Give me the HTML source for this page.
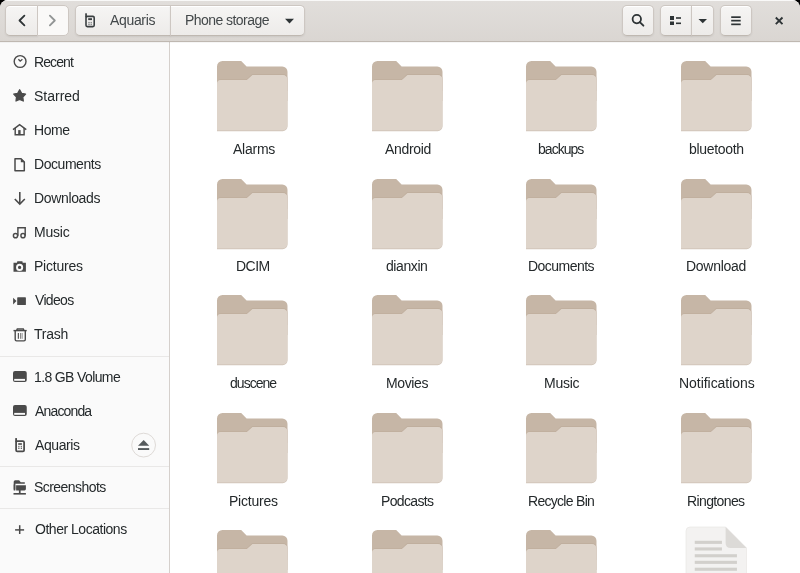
<!DOCTYPE html>
<html><head><meta charset="utf-8">
<style>
html,body{margin:0;padding:0;width:800px;height:573px;overflow:hidden;background:#000;}
*{box-sizing:border-box;}
.win{position:absolute;left:0;top:0;width:800px;height:573px;border-radius:8px 8px 0 0;overflow:hidden;background:#fff;font-family:"Liberation Sans",sans-serif;font-size:13px;color:#2e3436;}
.hdr{position:absolute;left:0;top:0;width:800px;height:42px;background:linear-gradient(to bottom,#e1dedb,#dad6d2);border-bottom:1px solid #bfb8b1;box-shadow:inset 0 1px rgba(255,255,255,0.8);}
.btn{position:absolute;top:5px;height:31px;border:1px solid #cdc7c2;border-bottom-color:#bfb8b1;background:linear-gradient(to bottom,#f6f5f4,#edebe9);box-shadow:inset 0 1px #fff,0 1px 2px rgba(0,0,0,0.07);border-radius:5px;}
.side{position:absolute;left:0;top:42px;width:170px;height:531px;background:#fafafa;border-right:1px solid #d5d0cc;}
.t{position:absolute;white-space:nowrap;line-height:15px;height:15px;font-size:14px;will-change:transform;color:#24292b;}
.sep{position:absolute;left:0;width:169px;height:1px;background:#e9e8e7;}
svg{position:absolute;overflow:visible;}
</style></head><body>
<div class="win">
<div class="hdr">
  <div class="btn" style="left:5px;width:33px;border-radius:5px 0 0 5px;"></div>
  <div class="btn" style="left:37px;width:32px;border-radius:0 5px 5px 0;background:#faf9f8;box-shadow:none;border-color:#cdc7c2;"></div>
  <div class="btn" style="left:75px;width:96px;border-radius:5px 0 0 5px;"></div>
  <div class="btn" style="left:170px;width:135px;border-radius:0 5px 5px 0;"></div>
  <div class="btn" style="left:622px;width:32px;"></div>
  <div class="btn" style="left:660px;width:32px;border-radius:5px 0 0 5px;"></div>
  <div class="btn" style="left:691px;width:23px;border-radius:0 5px 5px 0;"></div>
  <div class="btn" style="left:720px;width:32px;"></div>
  <svg width="800" height="42" style="left:0;top:0">
    <polyline points="24.4,15.6 19.5,20.5 24.4,25.4" fill="none" stroke="#2e3436" stroke-width="1.8" stroke-linecap="round" stroke-linejoin="round"/>
    <polyline points="49.9,15.6 54.8,20.5 49.9,25.4" fill="none" stroke="#929595" stroke-width="1.8" stroke-linecap="round" stroke-linejoin="round"/>
    <!-- phone -->
    <rect x="86" y="16.4" width="8.2" height="10.25" rx="1.3" fill="none" stroke="#3a3f41" stroke-width="1.6"/>
    <rect x="85.2" y="13.3" width="1.7" height="4" fill="#3a3f41"/>
    <rect x="88.2" y="18.2" width="3.8" height="1.9" fill="#3a3f41"/>
    <rect x="88.2" y="21.9" width="1.6" height="1.4" fill="#8f9293"/><rect x="90.5" y="21.9" width="1.5" height="1.4" fill="#8f9293"/>
    <rect x="88.2" y="23.8" width="1.6" height="1.3" fill="#8f9293"/><rect x="90.5" y="23.8" width="1.5" height="1.3" fill="#8f9293"/>
    <polygon points="285,18.8 294,18.8 289.5,23.5" fill="#2e3436"/>
    <!-- search -->
    <circle cx="636.8" cy="19.1" r="4.2" fill="none" stroke="#2e3436" stroke-width="1.8"/>
    <line x1="639.8" y1="22.1" x2="643.4" y2="25.7" stroke="#2e3436" stroke-width="1.9" stroke-linecap="round"/>
    <!-- view list -->
    <rect x="670" y="16" width="4" height="4" fill="#2e3436"/>
    <rect x="670" y="21.5" width="4" height="3.5" fill="#2e3436"/>
    <rect x="676" y="17.2" width="5" height="1.6" fill="#2e3436"/>
    <rect x="676" y="22.5" width="5" height="1.6" fill="#2e3436"/>
    <polygon points="698.5,18.9 707,18.9 702.75,23.3" fill="#2e3436"/>
    <!-- menu -->
    <rect x="731.2" y="16.3" width="9.5" height="1.7" fill="#2e3436"/>
    <rect x="731.2" y="19.8" width="9.5" height="1.7" fill="#2e3436"/>
    <rect x="731.2" y="23.5" width="9.5" height="1.7" fill="#2e3436"/>
    <!-- close -->
    <path d="M775.8,17.5 L782.5,24.2 M782.5,17.5 L775.8,24.2" stroke="#2e3436" stroke-width="1.9"/>
  </svg>
</div>

<div class="side">
</div>
<svg width="170" height="573" style="left:0;top:0">
  <g fill="none" stroke="#4a4a4a" stroke-width="1.4">
    <circle cx="20.1" cy="61.5" r="5.9"/>
    <polyline points="18.4,59.2 20.2,61.2 22.4,59.2" stroke-width="1.3"/>
  </g>
  <polygon points="19.65,89.80 21.59,93.33 25.55,94.08 22.79,97.02 23.29,101.02 19.65,99.30 16.01,101.02 16.51,97.02 13.75,94.08 17.71,93.33" fill="#4a4a4a" stroke="#4a4a4a" stroke-width="1.3" stroke-linejoin="round"/>
  <g fill="none" stroke="#4a4a4a" stroke-width="1.45">
    <polyline points="13,129.6 19.6,124.6 26.3,129.6"/>
    <polyline points="15.2,128 15.2,134.8 24.1,134.8 24.1,128"/>
  </g>
  <rect x="18.2" y="130.1" width="2.4" height="5" fill="#4a4a4a"/>
  <path d="M15,158.8 L21,158.8 L24.3,162.1 L24.3,170.7 L15,170.7 Z" fill="none" stroke="#4a4a4a" stroke-width="1.5" stroke-linejoin="round"/>
  <path d="M20.8,158.2 L20.8,162.2 L25,162.2 Z" fill="#4a4a4a"/>
  <g fill="none" stroke="#4a4a4a" stroke-width="1.6">
    <line x1="19.8" y1="192" x2="19.8" y2="203"/>
    <polyline points="14.8,199 19.8,204 24.8,199"/>
  </g>
  <g fill="none" stroke="#4a4a4a" stroke-width="1.45">
    <circle cx="15.5" cy="235.7" r="2.1"/>
    <circle cx="23" cy="235.7" r="2.1"/>
    <polyline points="17.9,235.7 17.9,227.7 25.2,227.7 25.2,235.7"/>
  </g>
  <path d="M13.5,262.8 L17,262.8 L17.3,261.2 L22.4,261.2 L22.7,262.8 L25.9,262.8 L25.9,271.7 L13.5,271.7 Z" fill="#4a4a4a"/>
  <circle cx="19.6" cy="267.4" r="2.6" fill="none" stroke="#fafafa" stroke-width="1.9"/>
  <path d="M13.1,297.8 L16.5,301.1 L13.1,304.4 Z" fill="#4a4a4a"/>
  <rect x="17.2" y="297.3" width="8.7" height="7.7" rx="0.6" fill="#4a4a4a"/>
  <g fill="none" stroke="#4a4a4a" stroke-width="1.4">
    <line x1="13.5" y1="330.6" x2="26.7" y2="330.6"/>
    <polyline points="16.6,330.6 17.3,329 23.3,329 24,330.6"/>
    <path d="M15.2,331 L15.2,339.5 Q15.2,340.9 16.6,340.9 L24,340.9 Q25.3,340.9 25.3,339.5 L25.3,331"/>
  </g>
  <rect x="17.8" y="333" width="1.1" height="5.8" fill="#4a4a4a"/>
  <rect x="20" y="333" width="1" height="5.8" fill="#888"/>
  <rect x="21.6" y="333" width="1" height="5.8" fill="#888"/>
  <rect x="13" y="371.1" width="13.75" height="10.8" rx="2" fill="#4a4a4a"/>
  <rect x="14.2" y="378.9" width="10.8" height="1.9" fill="#fafafa"/>
  <rect x="13" y="405.1" width="13.75" height="10.8" rx="2" fill="#4a4a4a"/>
  <rect x="14.2" y="412.9" width="10.8" height="1.9" fill="#fafafa"/>
  <rect x="16.1" y="441.1" width="8" height="10.3" rx="1.2" fill="none" stroke="#4a4a4a" stroke-width="1.75"/>
  <rect x="15.2" y="438.1" width="1.8" height="4" fill="#4a4a4a"/>
  <rect x="18.2" y="443.2" width="3.7" height="1.6" fill="#4a4a4a"/>
  <rect x="18.2" y="445.8" width="1.3" height="1.2" fill="#777"/><rect x="20.7" y="445.8" width="1.3" height="1.2" fill="#777"/>
  <rect x="18.2" y="447.6" width="1.3" height="1.3" fill="#555"/><rect x="20.7" y="447.6" width="1.3" height="1.3" fill="#555"/>
  <path d="M13.7,481.8 Q13.7,480.3 15.2,480.3 L19.1,480.3 L20.8,482.2 L24.8,482.2 L24.8,483.8 L15.3,483.8 L15.3,490.4 L13.7,490.4 Z" fill="#4a4a4a"/>
  <path d="M16.1,485.2 L25.9,485.2 L25.9,489 Q25.9,490.4 24.5,490.4 L16.1,490.4 Z" fill="#4a4a4a"/>
  <rect x="13.7" y="484.5" width="1.6" height="5" fill="#4a4a4a"/>
  <rect x="18.9" y="490" width="1.7" height="3.2" fill="#4a4a4a"/>
  <rect x="13.5" y="493" width="12.4" height="1.6" fill="#4a4a4a"/>
  <g stroke="#4a4a4a" stroke-width="1.5"><line x1="15.1" y1="529.9" x2="24.1" y2="529.9"/><line x1="19.7" y1="525.2" x2="19.7" y2="534"/></g>
  <circle cx="143.6" cy="445.1" r="11.9" fill="none" stroke="#dedad7" stroke-width="1"/>
  <path d="M143.7,440 L149.2,445.8 L138,445.8 Z" fill="#555a5c"/>
  <rect x="138" y="448.1" width="11.2" height="1.9" fill="#555a5c"/>
</svg>
<div style="position:absolute;left:0;top:42px;width:800px;height:1px;background:rgba(0,0,0,0.035)"></div>
<div class="sep" style="top:356px"></div>
<div class="sep" style="top:466px"></div>
<div class="sep" style="top:508px"></div>

<!--TEXT-->
<div class="t" style="left:34px;top:55px;letter-spacing:-0.9px">Recent</div>
<div class="t" style="left:34px;top:89px;letter-spacing:0.0px">Starred</div>
<div class="t" style="left:34px;top:123px;letter-spacing:-0.467px">Home</div>
<div class="t" style="left:34px;top:157px;letter-spacing:-0.45px">Documents</div>
<div class="t" style="left:34px;top:191px;letter-spacing:-0.35px">Downloads</div>
<div class="t" style="left:34px;top:225px;letter-spacing:-0.225px">Music</div>
<div class="t" style="left:34px;top:259px;letter-spacing:-0.214px">Pictures</div>
<div class="t" style="left:35px;top:293px;letter-spacing:-0.68px">Videos</div>
<div class="t" style="left:34px;top:327px;letter-spacing:-0.225px">Trash</div>
<div class="t" style="left:34px;top:370px;letter-spacing:-0.625px">1.8 GB Volume</div>
<div class="t" style="left:35px;top:404px;letter-spacing:-0.843px">Anaconda</div>
<div class="t" style="left:35px;top:438px;letter-spacing:-0.417px">Aquaris</div>
<div class="t" style="left:34px;top:480px;letter-spacing:-0.56px">Screenshots</div>
<div class="t" style="left:35px;top:522px;letter-spacing:-0.479px">Other Locations</div>
<div class="t" style="left:110px;top:13px;letter-spacing:-0.333px;color:#43484a">Aquaris</div>
<div class="t" style="left:185px;top:13px;letter-spacing:-0.55px;color:#43484a">Phone storage</div>
<div class="t" style="left:233px;top:142px;letter-spacing:-0.24px">Alarms</div>
<div class="t" style="left:385px;top:142px;letter-spacing:-0.333px">Android</div>
<div class="t" style="left:538px;top:142px;letter-spacing:-0.967px">backups</div>
<div class="t" style="left:689px;top:142px;letter-spacing:-0.325px">bluetooth</div>
<div class="t" style="left:236px;top:259px;letter-spacing:-0.5px">DCIM</div>
<div class="t" style="left:386px;top:259px;letter-spacing:-0.417px">dianxin</div>
<div class="t" style="left:528px;top:259px;letter-spacing:-0.525px">Documents</div>
<div class="t" style="left:686px;top:259px;letter-spacing:-0.286px">Download</div>
<div class="t" style="left:230px;top:376px;letter-spacing:-0.967px">duscene</div>
<div class="t" style="left:386px;top:376px;letter-spacing:-0.38px">Movies</div>
<div class="t" style="left:544px;top:376px;letter-spacing:-0.25px">Music</div>
<div class="t" style="left:679px;top:376px;letter-spacing:-0.042px">Notifications</div>
<div class="t" style="left:229px;top:494px;letter-spacing:-0.229px">Pictures</div>
<div class="t" style="left:381px;top:494px;letter-spacing:-0.657px">Podcasts</div>
<div class="t" style="left:528px;top:494px;letter-spacing:-0.71px">Recycle Bin</div>
<div class="t" style="left:687px;top:494px;letter-spacing:-0.625px">Ringtones</div>
<!--/TEXT-->
<!--GRID-->
<svg width="72" height="72" style="left:217.4px;top:60.9px" viewBox="0 0 72 72">
<path d="M0,5.5 A5.5,5.5 0 0 1 5.5,0 L24.2,0 L29.6,5.6 L65.3,5.6 A5.2,5.2 0 0 1 70.5,10.8 L70.5,40 L0,40 Z" fill="#c6b6a6"/>
<path d="M0,22.2 A4,4 0 0 1 4,18.2 L29.7,18.2 L35.3,12.9 L65.5,12.9 A5,5 0 0 1 70.5,17.9 L70.5,30 L0,30 Z" fill="#b9a896" opacity="0.5"/>
<path d="M0,23 A4,4 0 0 1 4,19 L30,19 L35.6,13.9 L65.5,13.9 A5,5 0 0 1 70.5,18.9 L70.5,65.4 A4.8,4.8 0 0 1 65.7,70.2 L0,70.2 Z" fill="#d2c6ba"/>
<path d="M0,23 A4,4 0 0 1 4,19 L30,19 L35.6,13.9 L65.5,13.9 A5,5 0 0 1 70.5,18.9 L70.5,64.5 A4.8,4.8 0 0 1 65.7,69.3 L0,69.3 Z" fill="#ded4ca"/>
</svg>
<svg width="72" height="72" style="left:372.1px;top:60.9px" viewBox="0 0 72 72">
<path d="M0,5.5 A5.5,5.5 0 0 1 5.5,0 L24.2,0 L29.6,5.6 L65.3,5.6 A5.2,5.2 0 0 1 70.5,10.8 L70.5,40 L0,40 Z" fill="#c6b6a6"/>
<path d="M0,22.2 A4,4 0 0 1 4,18.2 L29.7,18.2 L35.3,12.9 L65.5,12.9 A5,5 0 0 1 70.5,17.9 L70.5,30 L0,30 Z" fill="#b9a896" opacity="0.5"/>
<path d="M0,23 A4,4 0 0 1 4,19 L30,19 L35.6,13.9 L65.5,13.9 A5,5 0 0 1 70.5,18.9 L70.5,65.4 A4.8,4.8 0 0 1 65.7,70.2 L0,70.2 Z" fill="#d2c6ba"/>
<path d="M0,23 A4,4 0 0 1 4,19 L30,19 L35.6,13.9 L65.5,13.9 A5,5 0 0 1 70.5,18.9 L70.5,64.5 A4.8,4.8 0 0 1 65.7,69.3 L0,69.3 Z" fill="#ded4ca"/>
</svg>
<svg width="72" height="72" style="left:526.3px;top:60.9px" viewBox="0 0 72 72">
<path d="M0,5.5 A5.5,5.5 0 0 1 5.5,0 L24.2,0 L29.6,5.6 L65.3,5.6 A5.2,5.2 0 0 1 70.5,10.8 L70.5,40 L0,40 Z" fill="#c6b6a6"/>
<path d="M0,22.2 A4,4 0 0 1 4,18.2 L29.7,18.2 L35.3,12.9 L65.5,12.9 A5,5 0 0 1 70.5,17.9 L70.5,30 L0,30 Z" fill="#b9a896" opacity="0.5"/>
<path d="M0,23 A4,4 0 0 1 4,19 L30,19 L35.6,13.9 L65.5,13.9 A5,5 0 0 1 70.5,18.9 L70.5,65.4 A4.8,4.8 0 0 1 65.7,70.2 L0,70.2 Z" fill="#d2c6ba"/>
<path d="M0,23 A4,4 0 0 1 4,19 L30,19 L35.6,13.9 L65.5,13.9 A5,5 0 0 1 70.5,18.9 L70.5,64.5 A4.8,4.8 0 0 1 65.7,69.3 L0,69.3 Z" fill="#ded4ca"/>
</svg>
<svg width="72" height="72" style="left:681.25px;top:60.9px" viewBox="0 0 72 72">
<path d="M0,5.5 A5.5,5.5 0 0 1 5.5,0 L24.2,0 L29.6,5.6 L65.3,5.6 A5.2,5.2 0 0 1 70.5,10.8 L70.5,40 L0,40 Z" fill="#c6b6a6"/>
<path d="M0,22.2 A4,4 0 0 1 4,18.2 L29.7,18.2 L35.3,12.9 L65.5,12.9 A5,5 0 0 1 70.5,17.9 L70.5,30 L0,30 Z" fill="#b9a896" opacity="0.5"/>
<path d="M0,23 A4,4 0 0 1 4,19 L30,19 L35.6,13.9 L65.5,13.9 A5,5 0 0 1 70.5,18.9 L70.5,65.4 A4.8,4.8 0 0 1 65.7,70.2 L0,70.2 Z" fill="#d2c6ba"/>
<path d="M0,23 A4,4 0 0 1 4,19 L30,19 L35.6,13.9 L65.5,13.9 A5,5 0 0 1 70.5,18.9 L70.5,64.5 A4.8,4.8 0 0 1 65.7,69.3 L0,69.3 Z" fill="#ded4ca"/>
</svg>
<svg width="72" height="72" style="left:217.4px;top:178.7px" viewBox="0 0 72 72">
<path d="M0,5.5 A5.5,5.5 0 0 1 5.5,0 L24.2,0 L29.6,5.6 L65.3,5.6 A5.2,5.2 0 0 1 70.5,10.8 L70.5,40 L0,40 Z" fill="#c6b6a6"/>
<path d="M0,22.2 A4,4 0 0 1 4,18.2 L29.7,18.2 L35.3,12.9 L65.5,12.9 A5,5 0 0 1 70.5,17.9 L70.5,30 L0,30 Z" fill="#b9a896" opacity="0.5"/>
<path d="M0,23 A4,4 0 0 1 4,19 L30,19 L35.6,13.9 L65.5,13.9 A5,5 0 0 1 70.5,18.9 L70.5,65.4 A4.8,4.8 0 0 1 65.7,70.2 L0,70.2 Z" fill="#d2c6ba"/>
<path d="M0,23 A4,4 0 0 1 4,19 L30,19 L35.6,13.9 L65.5,13.9 A5,5 0 0 1 70.5,18.9 L70.5,64.5 A4.8,4.8 0 0 1 65.7,69.3 L0,69.3 Z" fill="#ded4ca"/>
</svg>
<svg width="72" height="72" style="left:372.1px;top:178.7px" viewBox="0 0 72 72">
<path d="M0,5.5 A5.5,5.5 0 0 1 5.5,0 L24.2,0 L29.6,5.6 L65.3,5.6 A5.2,5.2 0 0 1 70.5,10.8 L70.5,40 L0,40 Z" fill="#c6b6a6"/>
<path d="M0,22.2 A4,4 0 0 1 4,18.2 L29.7,18.2 L35.3,12.9 L65.5,12.9 A5,5 0 0 1 70.5,17.9 L70.5,30 L0,30 Z" fill="#b9a896" opacity="0.5"/>
<path d="M0,23 A4,4 0 0 1 4,19 L30,19 L35.6,13.9 L65.5,13.9 A5,5 0 0 1 70.5,18.9 L70.5,65.4 A4.8,4.8 0 0 1 65.7,70.2 L0,70.2 Z" fill="#d2c6ba"/>
<path d="M0,23 A4,4 0 0 1 4,19 L30,19 L35.6,13.9 L65.5,13.9 A5,5 0 0 1 70.5,18.9 L70.5,64.5 A4.8,4.8 0 0 1 65.7,69.3 L0,69.3 Z" fill="#ded4ca"/>
</svg>
<svg width="72" height="72" style="left:526.3px;top:178.7px" viewBox="0 0 72 72">
<path d="M0,5.5 A5.5,5.5 0 0 1 5.5,0 L24.2,0 L29.6,5.6 L65.3,5.6 A5.2,5.2 0 0 1 70.5,10.8 L70.5,40 L0,40 Z" fill="#c6b6a6"/>
<path d="M0,22.2 A4,4 0 0 1 4,18.2 L29.7,18.2 L35.3,12.9 L65.5,12.9 A5,5 0 0 1 70.5,17.9 L70.5,30 L0,30 Z" fill="#b9a896" opacity="0.5"/>
<path d="M0,23 A4,4 0 0 1 4,19 L30,19 L35.6,13.9 L65.5,13.9 A5,5 0 0 1 70.5,18.9 L70.5,65.4 A4.8,4.8 0 0 1 65.7,70.2 L0,70.2 Z" fill="#d2c6ba"/>
<path d="M0,23 A4,4 0 0 1 4,19 L30,19 L35.6,13.9 L65.5,13.9 A5,5 0 0 1 70.5,18.9 L70.5,64.5 A4.8,4.8 0 0 1 65.7,69.3 L0,69.3 Z" fill="#ded4ca"/>
</svg>
<svg width="72" height="72" style="left:681.25px;top:178.7px" viewBox="0 0 72 72">
<path d="M0,5.5 A5.5,5.5 0 0 1 5.5,0 L24.2,0 L29.6,5.6 L65.3,5.6 A5.2,5.2 0 0 1 70.5,10.8 L70.5,40 L0,40 Z" fill="#c6b6a6"/>
<path d="M0,22.2 A4,4 0 0 1 4,18.2 L29.7,18.2 L35.3,12.9 L65.5,12.9 A5,5 0 0 1 70.5,17.9 L70.5,30 L0,30 Z" fill="#b9a896" opacity="0.5"/>
<path d="M0,23 A4,4 0 0 1 4,19 L30,19 L35.6,13.9 L65.5,13.9 A5,5 0 0 1 70.5,18.9 L70.5,65.4 A4.8,4.8 0 0 1 65.7,70.2 L0,70.2 Z" fill="#d2c6ba"/>
<path d="M0,23 A4,4 0 0 1 4,19 L30,19 L35.6,13.9 L65.5,13.9 A5,5 0 0 1 70.5,18.9 L70.5,64.5 A4.8,4.8 0 0 1 65.7,69.3 L0,69.3 Z" fill="#ded4ca"/>
</svg>
<svg width="72" height="72" style="left:217.4px;top:295.4px" viewBox="0 0 72 72">
<path d="M0,5.5 A5.5,5.5 0 0 1 5.5,0 L24.2,0 L29.6,5.6 L65.3,5.6 A5.2,5.2 0 0 1 70.5,10.8 L70.5,40 L0,40 Z" fill="#c6b6a6"/>
<path d="M0,22.2 A4,4 0 0 1 4,18.2 L29.7,18.2 L35.3,12.9 L65.5,12.9 A5,5 0 0 1 70.5,17.9 L70.5,30 L0,30 Z" fill="#b9a896" opacity="0.5"/>
<path d="M0,23 A4,4 0 0 1 4,19 L30,19 L35.6,13.9 L65.5,13.9 A5,5 0 0 1 70.5,18.9 L70.5,65.4 A4.8,4.8 0 0 1 65.7,70.2 L0,70.2 Z" fill="#d2c6ba"/>
<path d="M0,23 A4,4 0 0 1 4,19 L30,19 L35.6,13.9 L65.5,13.9 A5,5 0 0 1 70.5,18.9 L70.5,64.5 A4.8,4.8 0 0 1 65.7,69.3 L0,69.3 Z" fill="#ded4ca"/>
</svg>
<svg width="72" height="72" style="left:372.1px;top:295.4px" viewBox="0 0 72 72">
<path d="M0,5.5 A5.5,5.5 0 0 1 5.5,0 L24.2,0 L29.6,5.6 L65.3,5.6 A5.2,5.2 0 0 1 70.5,10.8 L70.5,40 L0,40 Z" fill="#c6b6a6"/>
<path d="M0,22.2 A4,4 0 0 1 4,18.2 L29.7,18.2 L35.3,12.9 L65.5,12.9 A5,5 0 0 1 70.5,17.9 L70.5,30 L0,30 Z" fill="#b9a896" opacity="0.5"/>
<path d="M0,23 A4,4 0 0 1 4,19 L30,19 L35.6,13.9 L65.5,13.9 A5,5 0 0 1 70.5,18.9 L70.5,65.4 A4.8,4.8 0 0 1 65.7,70.2 L0,70.2 Z" fill="#d2c6ba"/>
<path d="M0,23 A4,4 0 0 1 4,19 L30,19 L35.6,13.9 L65.5,13.9 A5,5 0 0 1 70.5,18.9 L70.5,64.5 A4.8,4.8 0 0 1 65.7,69.3 L0,69.3 Z" fill="#ded4ca"/>
</svg>
<svg width="72" height="72" style="left:526.3px;top:295.4px" viewBox="0 0 72 72">
<path d="M0,5.5 A5.5,5.5 0 0 1 5.5,0 L24.2,0 L29.6,5.6 L65.3,5.6 A5.2,5.2 0 0 1 70.5,10.8 L70.5,40 L0,40 Z" fill="#c6b6a6"/>
<path d="M0,22.2 A4,4 0 0 1 4,18.2 L29.7,18.2 L35.3,12.9 L65.5,12.9 A5,5 0 0 1 70.5,17.9 L70.5,30 L0,30 Z" fill="#b9a896" opacity="0.5"/>
<path d="M0,23 A4,4 0 0 1 4,19 L30,19 L35.6,13.9 L65.5,13.9 A5,5 0 0 1 70.5,18.9 L70.5,65.4 A4.8,4.8 0 0 1 65.7,70.2 L0,70.2 Z" fill="#d2c6ba"/>
<path d="M0,23 A4,4 0 0 1 4,19 L30,19 L35.6,13.9 L65.5,13.9 A5,5 0 0 1 70.5,18.9 L70.5,64.5 A4.8,4.8 0 0 1 65.7,69.3 L0,69.3 Z" fill="#ded4ca"/>
</svg>
<svg width="72" height="72" style="left:681.25px;top:295.4px" viewBox="0 0 72 72">
<path d="M0,5.5 A5.5,5.5 0 0 1 5.5,0 L24.2,0 L29.6,5.6 L65.3,5.6 A5.2,5.2 0 0 1 70.5,10.8 L70.5,40 L0,40 Z" fill="#c6b6a6"/>
<path d="M0,22.2 A4,4 0 0 1 4,18.2 L29.7,18.2 L35.3,12.9 L65.5,12.9 A5,5 0 0 1 70.5,17.9 L70.5,30 L0,30 Z" fill="#b9a896" opacity="0.5"/>
<path d="M0,23 A4,4 0 0 1 4,19 L30,19 L35.6,13.9 L65.5,13.9 A5,5 0 0 1 70.5,18.9 L70.5,65.4 A4.8,4.8 0 0 1 65.7,70.2 L0,70.2 Z" fill="#d2c6ba"/>
<path d="M0,23 A4,4 0 0 1 4,19 L30,19 L35.6,13.9 L65.5,13.9 A5,5 0 0 1 70.5,18.9 L70.5,64.5 A4.8,4.8 0 0 1 65.7,69.3 L0,69.3 Z" fill="#ded4ca"/>
</svg>
<svg width="72" height="72" style="left:217.4px;top:412.9px" viewBox="0 0 72 72">
<path d="M0,5.5 A5.5,5.5 0 0 1 5.5,0 L24.2,0 L29.6,5.6 L65.3,5.6 A5.2,5.2 0 0 1 70.5,10.8 L70.5,40 L0,40 Z" fill="#c6b6a6"/>
<path d="M0,22.2 A4,4 0 0 1 4,18.2 L29.7,18.2 L35.3,12.9 L65.5,12.9 A5,5 0 0 1 70.5,17.9 L70.5,30 L0,30 Z" fill="#b9a896" opacity="0.5"/>
<path d="M0,23 A4,4 0 0 1 4,19 L30,19 L35.6,13.9 L65.5,13.9 A5,5 0 0 1 70.5,18.9 L70.5,65.4 A4.8,4.8 0 0 1 65.7,70.2 L0,70.2 Z" fill="#d2c6ba"/>
<path d="M0,23 A4,4 0 0 1 4,19 L30,19 L35.6,13.9 L65.5,13.9 A5,5 0 0 1 70.5,18.9 L70.5,64.5 A4.8,4.8 0 0 1 65.7,69.3 L0,69.3 Z" fill="#ded4ca"/>
</svg>
<svg width="72" height="72" style="left:372.1px;top:412.9px" viewBox="0 0 72 72">
<path d="M0,5.5 A5.5,5.5 0 0 1 5.5,0 L24.2,0 L29.6,5.6 L65.3,5.6 A5.2,5.2 0 0 1 70.5,10.8 L70.5,40 L0,40 Z" fill="#c6b6a6"/>
<path d="M0,22.2 A4,4 0 0 1 4,18.2 L29.7,18.2 L35.3,12.9 L65.5,12.9 A5,5 0 0 1 70.5,17.9 L70.5,30 L0,30 Z" fill="#b9a896" opacity="0.5"/>
<path d="M0,23 A4,4 0 0 1 4,19 L30,19 L35.6,13.9 L65.5,13.9 A5,5 0 0 1 70.5,18.9 L70.5,65.4 A4.8,4.8 0 0 1 65.7,70.2 L0,70.2 Z" fill="#d2c6ba"/>
<path d="M0,23 A4,4 0 0 1 4,19 L30,19 L35.6,13.9 L65.5,13.9 A5,5 0 0 1 70.5,18.9 L70.5,64.5 A4.8,4.8 0 0 1 65.7,69.3 L0,69.3 Z" fill="#ded4ca"/>
</svg>
<svg width="72" height="72" style="left:526.3px;top:412.9px" viewBox="0 0 72 72">
<path d="M0,5.5 A5.5,5.5 0 0 1 5.5,0 L24.2,0 L29.6,5.6 L65.3,5.6 A5.2,5.2 0 0 1 70.5,10.8 L70.5,40 L0,40 Z" fill="#c6b6a6"/>
<path d="M0,22.2 A4,4 0 0 1 4,18.2 L29.7,18.2 L35.3,12.9 L65.5,12.9 A5,5 0 0 1 70.5,17.9 L70.5,30 L0,30 Z" fill="#b9a896" opacity="0.5"/>
<path d="M0,23 A4,4 0 0 1 4,19 L30,19 L35.6,13.9 L65.5,13.9 A5,5 0 0 1 70.5,18.9 L70.5,65.4 A4.8,4.8 0 0 1 65.7,70.2 L0,70.2 Z" fill="#d2c6ba"/>
<path d="M0,23 A4,4 0 0 1 4,19 L30,19 L35.6,13.9 L65.5,13.9 A5,5 0 0 1 70.5,18.9 L70.5,64.5 A4.8,4.8 0 0 1 65.7,69.3 L0,69.3 Z" fill="#ded4ca"/>
</svg>
<svg width="72" height="72" style="left:681.25px;top:412.9px" viewBox="0 0 72 72">
<path d="M0,5.5 A5.5,5.5 0 0 1 5.5,0 L24.2,0 L29.6,5.6 L65.3,5.6 A5.2,5.2 0 0 1 70.5,10.8 L70.5,40 L0,40 Z" fill="#c6b6a6"/>
<path d="M0,22.2 A4,4 0 0 1 4,18.2 L29.7,18.2 L35.3,12.9 L65.5,12.9 A5,5 0 0 1 70.5,17.9 L70.5,30 L0,30 Z" fill="#b9a896" opacity="0.5"/>
<path d="M0,23 A4,4 0 0 1 4,19 L30,19 L35.6,13.9 L65.5,13.9 A5,5 0 0 1 70.5,18.9 L70.5,65.4 A4.8,4.8 0 0 1 65.7,70.2 L0,70.2 Z" fill="#d2c6ba"/>
<path d="M0,23 A4,4 0 0 1 4,19 L30,19 L35.6,13.9 L65.5,13.9 A5,5 0 0 1 70.5,18.9 L70.5,64.5 A4.8,4.8 0 0 1 65.7,69.3 L0,69.3 Z" fill="#ded4ca"/>
</svg>
<svg width="72" height="72" style="left:217.4px;top:529.7px" viewBox="0 0 72 72">
<path d="M0,5.5 A5.5,5.5 0 0 1 5.5,0 L24.2,0 L29.6,5.6 L65.3,5.6 A5.2,5.2 0 0 1 70.5,10.8 L70.5,40 L0,40 Z" fill="#c6b6a6"/>
<path d="M0,22.2 A4,4 0 0 1 4,18.2 L29.7,18.2 L35.3,12.9 L65.5,12.9 A5,5 0 0 1 70.5,17.9 L70.5,30 L0,30 Z" fill="#b9a896" opacity="0.5"/>
<path d="M0,23 A4,4 0 0 1 4,19 L30,19 L35.6,13.9 L65.5,13.9 A5,5 0 0 1 70.5,18.9 L70.5,65.4 A4.8,4.8 0 0 1 65.7,70.2 L0,70.2 Z" fill="#d2c6ba"/>
<path d="M0,23 A4,4 0 0 1 4,19 L30,19 L35.6,13.9 L65.5,13.9 A5,5 0 0 1 70.5,18.9 L70.5,64.5 A4.8,4.8 0 0 1 65.7,69.3 L0,69.3 Z" fill="#ded4ca"/>
</svg>
<svg width="72" height="72" style="left:372.1px;top:529.7px" viewBox="0 0 72 72">
<path d="M0,5.5 A5.5,5.5 0 0 1 5.5,0 L24.2,0 L29.6,5.6 L65.3,5.6 A5.2,5.2 0 0 1 70.5,10.8 L70.5,40 L0,40 Z" fill="#c6b6a6"/>
<path d="M0,22.2 A4,4 0 0 1 4,18.2 L29.7,18.2 L35.3,12.9 L65.5,12.9 A5,5 0 0 1 70.5,17.9 L70.5,30 L0,30 Z" fill="#b9a896" opacity="0.5"/>
<path d="M0,23 A4,4 0 0 1 4,19 L30,19 L35.6,13.9 L65.5,13.9 A5,5 0 0 1 70.5,18.9 L70.5,65.4 A4.8,4.8 0 0 1 65.7,70.2 L0,70.2 Z" fill="#d2c6ba"/>
<path d="M0,23 A4,4 0 0 1 4,19 L30,19 L35.6,13.9 L65.5,13.9 A5,5 0 0 1 70.5,18.9 L70.5,64.5 A4.8,4.8 0 0 1 65.7,69.3 L0,69.3 Z" fill="#ded4ca"/>
</svg>
<svg width="72" height="72" style="left:526.3px;top:529.7px" viewBox="0 0 72 72">
<path d="M0,5.5 A5.5,5.5 0 0 1 5.5,0 L24.2,0 L29.6,5.6 L65.3,5.6 A5.2,5.2 0 0 1 70.5,10.8 L70.5,40 L0,40 Z" fill="#c6b6a6"/>
<path d="M0,22.2 A4,4 0 0 1 4,18.2 L29.7,18.2 L35.3,12.9 L65.5,12.9 A5,5 0 0 1 70.5,17.9 L70.5,30 L0,30 Z" fill="#b9a896" opacity="0.5"/>
<path d="M0,23 A4,4 0 0 1 4,19 L30,19 L35.6,13.9 L65.5,13.9 A5,5 0 0 1 70.5,18.9 L70.5,65.4 A4.8,4.8 0 0 1 65.7,70.2 L0,70.2 Z" fill="#d2c6ba"/>
<path d="M0,23 A4,4 0 0 1 4,19 L30,19 L35.6,13.9 L65.5,13.9 A5,5 0 0 1 70.5,18.9 L70.5,64.5 A4.8,4.8 0 0 1 65.7,69.3 L0,69.3 Z" fill="#ded4ca"/>
</svg>
<svg width="72" height="72" style="left:686px;top:526.8px" viewBox="0 0 72 72">
<path d="M0,4 Q0,0 4,0 L39.6,0 L60.5,21 L60.5,72 L0,72 Z" fill="#f3f2f1" stroke="#e6e4e1" stroke-width="0.6"/>
<path d="M39.6,0 L60.5,21 L44.6,21 Q39.6,21 39.6,16 Z" fill="#dcdad7"/>
<rect x="8.75" y="13.8" width="27.2" height="3.1" fill="#d2d0cc"/>
<rect x="8.75" y="20.4" width="27.2" height="3.1" fill="#d2d0cc"/>
<rect x="8.75" y="27.2" width="42.2" height="3.1" fill="#d2d0cc"/>
<rect x="8.75" y="33.8" width="42.2" height="3.1" fill="#d2d0cc"/>
<rect x="8.75" y="40.7" width="42.2" height="3.1" fill="#d2d0cc"/>
</svg>
<!--/GRID-->
</div>
</body></html>
